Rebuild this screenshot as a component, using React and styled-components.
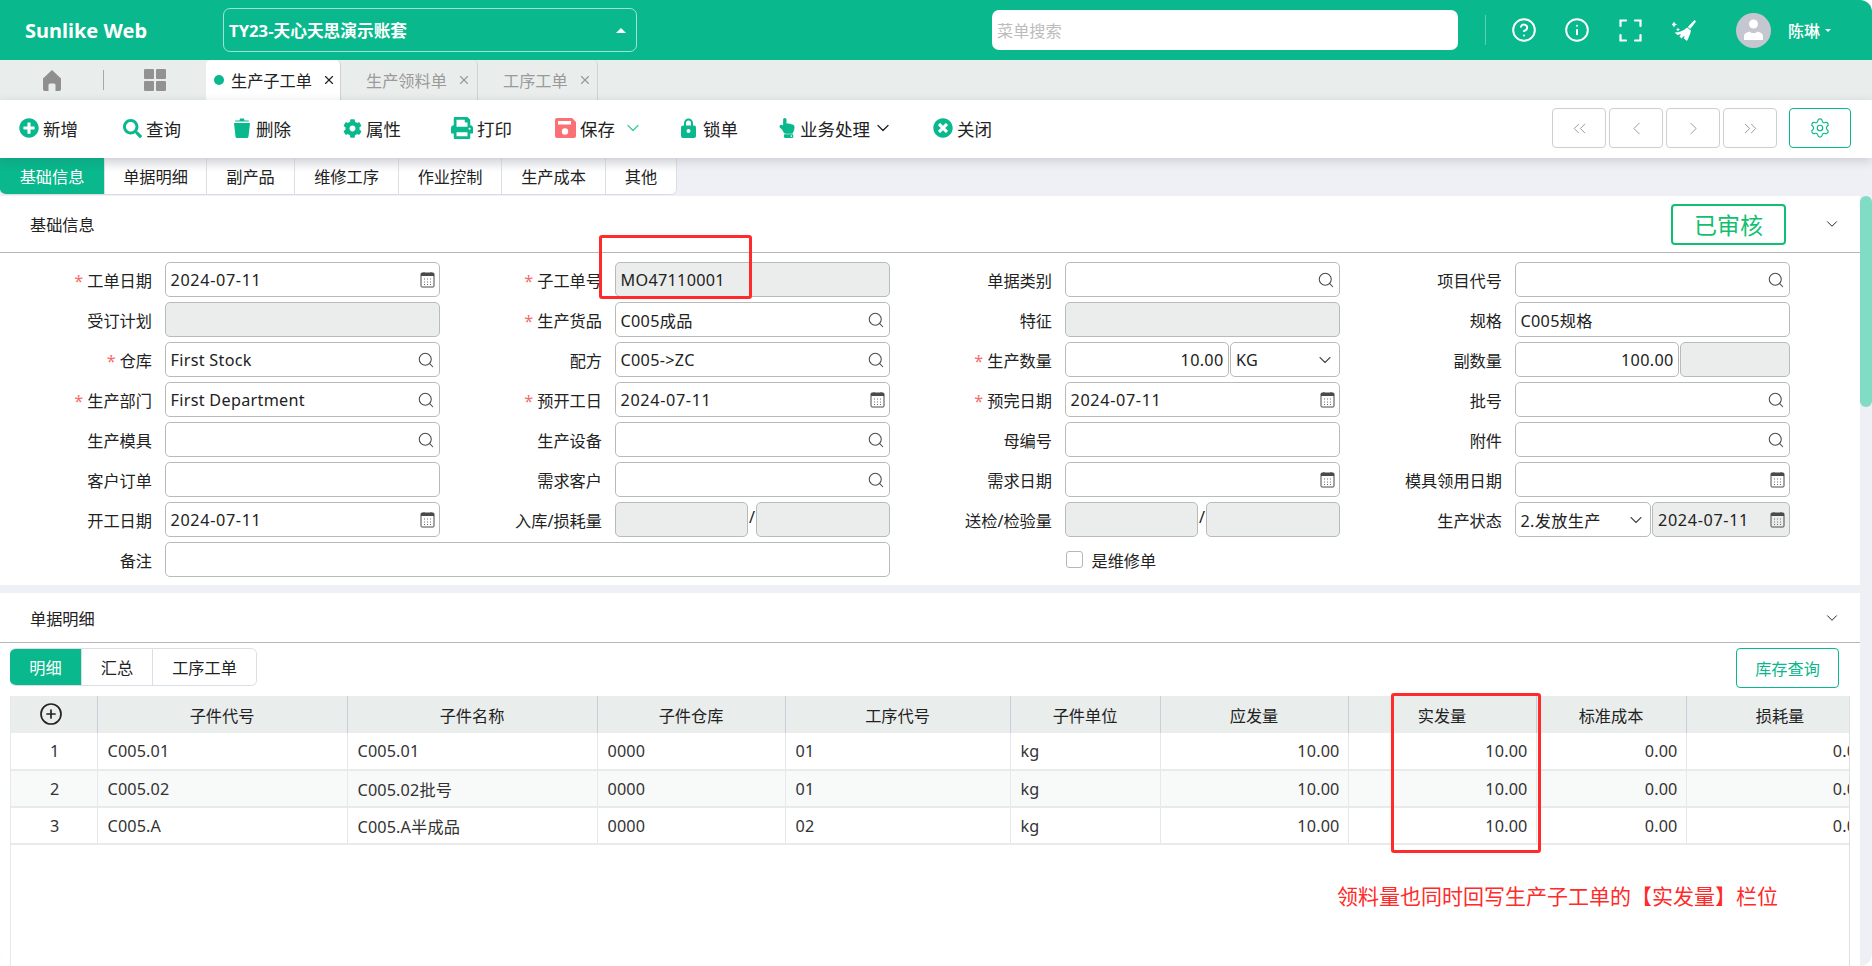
import React from "react";
import styled, { createGlobalStyle } from "styled-components";
import {
  Search,
  ChevronDown,
  ChevronLeft,
  ChevronRight,
  ChevronsLeft,
  ChevronsRight,
  Settings,
  CirclePlus,
  CircleHelp,
  Info,
  X,
} from "lucide-react";
import {
  FaPlusCircle,
  FaSearch,
  FaCog,
  FaPrint,
  FaHandPointUp,
  FaTimesCircle,
} from "react-icons/fa";

const GREEN = "#09b88c";

const GlobalStyle = createGlobalStyle`
  html, body {
    margin: 0;
    padding: 0;
    background: #fff;
    overflow: hidden;
  }
  * {
    box-sizing: border-box;
  }
  body {
    font-family: "Noto Sans", "Noto Sans CJK SC", sans-serif;
    font-size: 16.2px;
    color: #222;
  }
`;

const Page = styled.div`
  position: relative;
  width: 1872px;
  height: 966px;
  display: flex;
  flex-direction: column;
  overflow: hidden;
  background: #eff0f5;
  border-radius: 0 12px 12px 12px;
`;

const Header = styled.header`
  height: 60px;
  flex: none;
  display: flex;
  align-items: center;
  padding-left: 25px;
  background: ${GREEN};
  color: #fff;
`;

const Logo = styled.div`
  width: 198px;
  font-size: 20px;
  font-weight: 700;
`;

const BookSelect = styled.div`
  width: 414px;
  height: 44px;
  display: flex;
  align-items: center;
  justify-content: space-between;
  padding: 0 10px 0 5px;
  border: 1px solid rgba(255, 255, 255, 0.6);
  border-radius: 7px;
  font-size: 16.7px;
  font-weight: 700;
`;

const Caret = styled.span`
  width: 0;
  height: 0;
  border-left: ${(p) => p.$size}px solid transparent;
  border-right: ${(p) => p.$size}px solid transparent;
  border-${(p) => (p.$down ? "top" : "bottom")}: ${(p) => p.$size}px solid #fff;
`;

const MenuSearch = styled.div`
  width: 466px;
  height: 40px;
  margin-left: 355px;
  display: flex;
  align-items: center;
  padding-left: 5px;
  background: #fff;
  border-radius: 7px;
  color: #bcbcbc;
`;

const HeaderDivider = styled.span`
  width: 1px;
  height: 30px;
  margin-left: 27px;
  background: rgba(255, 255, 255, 0.35);
`;

const HeaderIcons = styled.div`
  width: 214px;
  margin-left: 11px;
  display: grid;
  grid-template-columns: repeat(4, 53.5px);
  justify-items: center;
  align-items: center;
`;

const Avatar = styled.div`
  width: 35px;
  height: 35px;
  margin-left: 25px;
  flex: none;
  border-radius: 50%;
  overflow: hidden;
  background: #c4c7d0;
`;

const UserName = styled.div`
  margin-left: 17px;
  margin-right: 5px;
  font-size: 16px;
  font-weight: 500;
`;

const TabBar = styled.nav`
  height: 40px;
  flex: none;
  display: flex;
  align-items: stretch;
  background: #e9edeb;
`;

const TabIcons = styled.div`
  width: 206px;
  display: flex;
  align-items: center;
`;

const TabIconCell = styled.div`
  width: ${(p) => p.$w}px;
  display: flex;
  justify-content: center;
`;

const TabSeparator = styled.span`
  width: 1px;
  height: 20px;
  background: #a5a9a8;
`;

const Tab = styled.div`
  width: ${(p) => p.$w}px;
  display: flex;
  align-items: center;
  gap: 5px;
  padding-left: ${(p) => (p.$active ? 8 : 25)}px;
  border-right: 1px solid #cfd2d2;
  border-radius: 5px 5px 0 0;
  background: ${(p) => (p.$active ? "#fff" : "transparent")};
  color: ${(p) => (p.$active ? "#222" : "#9a9a9a")};
`;

const TabDot = styled.span`
  width: 10px;
  height: 10px;
  margin-right: 2px;
  border-radius: 50%;
  background: ${GREEN};
`;

const TabClose = styled(X)`
  margin-left: 5px;
  flex: none;
`;

const Toolbar = styled.div`
  position: relative;
  z-index: 2;
  height: 58px;
  flex: none;
  display: flex;
  align-items: center;
  padding: 0 0 2px 19px;
  background: #fff;
  box-shadow: 0 3px 10px rgba(60, 64, 90, 0.2);
`;

const ToolItem = styled.div`
  width: ${(p) => p.$w}px;
  flex: none;
  display: flex;
  align-items: center;
  gap: ${(p) => p.$gap ?? 4}px;
  font-size: 17.5px;
  color: #222;
  svg {
    flex: none;
  }
`;

const ToolColor = styled.span`
  display: flex;
  color: ${(p) => p.$color || GREEN};
  margin-left: ${(p) => p.$ml || 0}px;
`;

const NavGroup = styled.div`
  margin-left: auto;
  margin-right: 21px;
  display: flex;
  align-items: center;
  gap: 3px;
`;

const NavButton = styled.div`
  width: ${(p) => (p.$accent ? 62 : 54)}px;
  height: 40px;
  margin-left: ${(p) => (p.$accent ? 9 : 0)}px;
  display: flex;
  align-items: center;
  justify-content: center;
  border: 1px solid ${(p) => (p.$accent ? GREEN : "#cfcfcf")};
  border-radius: 4px;
  color: ${(p) => (p.$accent ? GREEN : "#8c8c8c")};
`;

const SubTabRow = styled.div`
  height: 38px;
  flex: none;
  display: flex;
  align-items: flex-start;
  padding-bottom: 1px;
`;

const SubTabs = styled.div`
  display: flex;
  height: 37px;
  border: 1px solid #dcdee6;
  border-top: none;
  border-left: none;
  border-radius: 0 0 6px 6px;
  overflow: hidden;
`;

const SubTab = styled.div`
  width: ${(p) => p.$w}px;
  display: flex;
  align-items: center;
  justify-content: center;
  background: ${(p) =>
    p.$active ? GREEN : "linear-gradient(#eeeef1, #fff 40%)"};
  color: ${(p) => (p.$active ? "#fff" : "#222")};
  border-right: ${(p) => (p.$last ? "none" : "1px solid #dcdee6")};
`;

const Body = styled.div`
  flex: 1;
  min-height: 0;
  display: flex;
`;

const Content = styled.main`
  width: 1860px;
  flex: none;
  display: flex;
  flex-direction: column;
  gap: 8px;
`;

const Gutter = styled.div`
  flex: 1;
`;

const Thumb = styled.div`
  height: 211px;
  border-radius: 6px;
  background: #80dcc4;
`;

const Section = styled.section`
  background: #fff;
  flex: ${(p) => (p.$fill ? 1 : "none")};
  display: flex;
  flex-direction: column;
  min-height: 0;
`;

const SectionHead = styled.div`
  height: ${(p) => p.$h}px;
  flex: none;
  display: flex;
  align-items: center;
  padding: 0 19px 0 30px;
  border-bottom: 1px solid #b5b7b7;
`;

const SectionTitle = styled.div`
  flex: 1;
`;

const StatusBadge = styled.div`
  width: 115px;
  height: 41px;
  margin-right: 37px;
  display: flex;
  align-items: center;
  justify-content: center;
  border: 2px solid #10c070;
  border-radius: 4px;
  color: #10c070;
  font-size: 23px;
`;

const FormGrid = styled.div`
  display: grid;
  grid-template-columns: repeat(4, 450px);
  grid-auto-rows: 35px;
  row-gap: 5px;
  padding: 9px 0 8px;
`;

const FieldWrap = styled.div`
  grid-column: span ${(p) => p.$span || 1};
  display: flex;
  align-items: center;
`;

const Label = styled.label`
  width: 152px;
  flex: none;
  margin-right: 12.5px;
  text-align: right;
  white-space: nowrap;
`;

const Star = styled.span`
  margin-right: 4px;
  color: #f56c6c;
`;

const Controls = styled.div`
  width: ${(p) => p.$w || 275}px;
  height: 35px;
  display: flex;
  align-items: stretch;
  gap: ${(p) => p.$gap ?? 1.5}px;
`;

const Box = styled.div`
  flex: ${(p) => (p.$w ? `0 0 ${p.$w}px` : 1)};
  min-width: 0;
  display: flex;
  align-items: center;
  justify-content: ${(p) => (p.$right ? "flex-end" : "space-between")};
  padding: 0 4px 0 5px;
  border: 1px solid #b9bbbb;
  border-radius: 5px;
  background: ${(p) => (p.$off ? "#ebedec" : "#fff")};
  color: #222;
  letter-spacing: 0.3px;
  white-space: nowrap;
  svg {
    flex: none;
    color: #4a4a4a;
  }
`;

const DateText = styled.span`
  letter-spacing: 0.65px;
`;

const Slash = styled.span`
  width: 8px;
  text-align: center;
  line-height: 30px;
`;

const CheckWrap = styled.div`
  grid-column: 3;
  margin-left: 165.5px;
  display: flex;
  align-items: center;
  gap: 9px;
`;

const CheckBox = styled.span`
  width: 17px;
  height: 17px;
  border: 1.5px solid #b5b7b7;
  border-radius: 3px;
`;

const DetailBar = styled.div`
  display: flex;
  justify-content: space-between;
  align-items: flex-start;
  padding: 5px 21px 0 10px;
`;

const DetailTabs = styled.div`
  height: 38px;
  display: flex;
  border: 1px solid #dcdee6;
  border-left: none;
  border-radius: 6px;
  overflow: hidden;
`;

const DetailTab = styled.div`
  width: ${(p) => p.$w}px;
  display: flex;
  align-items: center;
  justify-content: center;
  background: ${(p) => (p.$active ? GREEN : "#fff")};
  color: ${(p) => (p.$active ? "#fff" : "#222")};
  border-right: ${(p) => (p.$last ? "none" : "1px solid #dcdee6")};
`;

const StockButton = styled.div`
  width: 103px;
  height: 40px;
  display: flex;
  align-items: center;
  justify-content: center;
  border: 1px solid ${GREEN};
  border-radius: 4px;
  color: ${GREEN};
`;

const TableWrap = styled.div`
  flex: 1;
  width: 1840px;
  margin: 8px 0 0 10px;
  overflow: hidden;
  border-left: 1px solid #e6e8ec;
  border-right: 1px solid #e0e0e0;
`;

const Table = styled.table`
  width: 1863px;
  table-layout: fixed;
  border-collapse: collapse;
`;

const Th = styled.th`
  height: 37px;
  padding: 0;
  background: #e9edec;
  border-right: 1px solid #c9cedb;
  font-weight: 400;
  text-align: center;
  color: #222;
`;

const AddRow = styled(CirclePlus)`
  display: block;
  margin: -2px 0 0 28px;
  color: #222;
`;

const Tr = styled.tr`
  background: ${(p) => (p.$alt ? "#f8f9f9" : "#fff")};
`;

const Td = styled.td`
  height: 37px;
  padding: 0 8px 0 10px;
  border-right: 1px solid #e6e8ec;
  border-bottom: 2px solid #e9ebeb;
  text-align: ${(p) => p.$align || "left"};
  color: #333;
  letter-spacing: 0.15px;
  white-space: nowrap;
`;

const MarkBox = styled.div`
  position: absolute;
  left: ${(p) => p.$x}px;
  top: ${(p) => p.$y}px;
  width: ${(p) => p.$w}px;
  height: ${(p) => p.$h}px;
  border: 3px solid #ff2a2a;
  border-radius: 3px;
  z-index: 5;
`;

const MarkNote = styled.div`
  position: absolute;
  left: 1337px;
  top: 880px;
  font-size: 21px;
  line-height: 32px;
  color: #ff2a2a;
  white-space: nowrap;
  z-index: 5;
`;

const Calendar = () => (
  <svg width="15" height="17" viewBox="0 0 15 17" fill="none">
    <rect x="1" y="2" width="13" height="14" rx="1" stroke="#4a4a4a" />
    <rect x="1" y="2" width="13" height="3" fill="#4a4a4a" />
    <path d="M4 1v2M11 1v2" stroke="#4a4a4a" />
    <path
      d="M4 8h1M7 8h1M10 8h1M4 11h1M7 11h1M10 11h1M4 13.5h1M7 13.5h1M10 13.5h1"
      stroke="#6a6a6a"
    />
  </svg>
);

const SearchIcon = () => <Search size={18} strokeWidth={1.4} />;
const DownIcon = () => <ChevronDown size={20} strokeWidth={1.3} />;

const FullScreen = () => (
  <svg width="23" height="23" viewBox="0 0 23 23" fill="none" stroke="#fff" strokeWidth="2.2" strokeLinecap="round">
    <path d="M1.5 7V1.5H7M16 1.5h5.5V7M21.5 16v5.5H16M7 21.5H1.5V16" />
  </svg>
);

const Broom = () => (
  <svg width="24" height="23" viewBox="0 0 24 23" fill="#fff">
    <path d="M22.5 1 24 2.5 18.2 10 15.8 8Z" />
    <path d="M15 8.500 19 11.500C18.200 15 16.800 18.500 15 22L12 19.500 12.500 16.500 9.500 19.500 7.500 17.500 9 15 5.500 16 2.500 13.500C7 13.500 11.500 12 15 8.500Z" />
    <path d="M2 2.500 3 4.500 5 5.500 3 6.500 2 8.500 1 6.500-1 5.500 1 4.500Z" />
    <path d="M6 8.500 6.700 10 8 10.500 6.700 11.200 6 12.500 5.300 11.200 4 10.500 5.300 10Z" />
  </svg>
);

const AvatarFace = () => (
  <svg width="35" height="35" viewBox="0 0 35 35" fill="#fff">
    <circle cx="17.5" cy="11" r="4.5" />
    <path d="M8 27v-3.500c0-3 2.500-4 5.500-5l2 1.500h4l2-1.500c3 1 5.500 2 5.500 5V27Z" />
  </svg>
);

const HomeIcon = () => (
  <svg width="18" height="21" viewBox="0 0 18 21" fill="#8f8f8f">
    <path d="M9 0 18 8.500V19a2 2 0 0 1-2 2h-3.500v-6a1.500 1.500 0 0 0-1.500-1.500H7A1.500 1.500 0 0 0 5.500 15v6H2a2 2 0 0 1-2-2V8.500Z" />
  </svg>
);

const Trash = () => (
  <svg width="18" height="20" viewBox="0 0 18 20" fill={GREEN}>
    <path d="M1 5h16l-1.500 13.500c-.1.900-.8 1.500-1.600 1.500H4.100c-.8 0-1.500-.6-1.600-1.500Z" />
    <path d="M7 .5h4l.5 2h3.500c.600 0 1 .4 1 1H2c0-.600.400-1 1-1h3.500Z" />
  </svg>
);

const Save = () => (
  <svg width="21" height="20" viewBox="0 0 21 20">
    <path d="M2 0h15l4 4v14a2 2 0 0 1-2 2H2a2 2 0 0 1-2-2V2a2 2 0 0 1 2-2Z" fill="#fb7075" />
    <rect x="3" y="3" width="13" height="3.500" fill="#fff" />
    <circle cx="10" cy="13.500" r="3.200" fill="#fff" />
  </svg>
);

const Lock = () => (
  <svg width="15" height="20" viewBox="0 0 15 20" fill={GREEN}>
    <path d="M3 8V5a4.500 4.500 0 0 1 9 0v3h-2V5a2.500 2.500 0 0 0-5 0v3Z" />
    <path d="M2 7.500h11a2 2 0 0 1 2 2V18a2 2 0 0 1-2 2H2a2 2 0 0 1-2-2V9.500a2 2 0 0 1 2-2Z" />
    <circle cx="7.500" cy="13" r="2" fill="#fff" />
  </svg>
);

const GridIcon = () => (
  <svg width="22" height="22" viewBox="0 0 22 22" fill="#929292">
    <rect width="10" height="10" rx="1" />
    <rect x="12" width="10" height="10" rx="1" />
    <rect y="12" width="10" height="10" rx="1" />
    <rect x="12" y="12" width="10" height="10" rx="1" />
  </svg>
);

const Field = ({ label, required, span, w, gap, children }) => (
  <FieldWrap $span={span}>
    <Label>
      {required && <Star>*</Star>}
      {label}
    </Label>
    <Controls $w={w} $gap={gap}>
      {children}
    </Controls>
  </FieldWrap>
);

const columns = [
  { title: "", w: 86 },
  { title: "子件代号", w: 250 },
  { title: "子件名称", w: 250 },
  { title: "子件仓库", w: 188 },
  { title: "工序代号", w: 225 },
  { title: "子件单位", w: 150 },
  { title: "应发量", w: 188, right: true },
  { title: "实发量", w: 188, right: true },
  { title: "标准成本", w: 150, right: true },
  { title: "损耗量", w: 188, right: true },
];

const rows = [
  ["C005.01", "C005.01", "0000", "01", "kg", "10.00", "10.00", "0.00", "0.00"],
  ["C005.02", "C005.02批号", "0000", "01", "kg", "10.00", "10.00", "0.00", "0.00"],
  ["C005.A", "C005.A半成品", "0000", "02", "kg", "10.00", "10.00", "0.00", "0.00"],
];

export default function App() {
  return (
    <Page>
      <GlobalStyle />
      <Header>
        <Logo>Sunlike Web</Logo>
        <BookSelect>
          TY23-天心天思演示账套
          <Caret $size={5} />
        </BookSelect>
        <MenuSearch>菜单搜索</MenuSearch>
        <HeaderDivider />
        <HeaderIcons>
          <CircleHelp size={26} strokeWidth={1.8} />
          <Info size={26} strokeWidth={1.8} />
          <FullScreen />
          <Broom />
        </HeaderIcons>
        <Avatar>
          <AvatarFace />
        </Avatar>
        <UserName>陈琳</UserName>
        <Caret $size={3.5} $down />
      </Header>

      <TabBar>
        <TabIcons>
          <TabIconCell $w={103}>
            <HomeIcon />
          </TabIconCell>
          <TabSeparator />
          <TabIconCell $w={102}>
            <GridIcon />
          </TabIconCell>
        </TabIcons>
        <Tab $active $w={135}>
          <TabDot />
          生产子工单
          <TabClose size={14} />
        </Tab>
        <Tab $w={137}>
          生产领料单
          <TabClose size={14} />
        </Tab>
        <Tab $w={120}>
          工序工单
          <TabClose size={14} />
        </Tab>
      </TabBar>

      <Toolbar>
        <ToolItem $w={104}>
          <ToolColor><FaPlusCircle size={20} /></ToolColor>新增
        </ToolItem>
        <ToolItem $w={110}>
          <ToolColor><FaSearch size={19} /></ToolColor>查询
        </ToolItem>
        <ToolItem $w={110} $gap={5}>
          <Trash />删除
        </ToolItem>
        <ToolItem $w={108}>
          <ToolColor><FaCog size={19} /></ToolColor>属性
        </ToolItem>
        <ToolItem $w={104}>
          <ToolColor><FaPrint size={22} /></ToolColor>打印
        </ToolItem>
        <ToolItem $w={126}>
          <Save />保存
          <ToolColor $color="#3cc8a4" $ml={4}>
            <ChevronDown size={20} strokeWidth={1.5} />
          </ToolColor>
        </ToolItem>
        <ToolItem $w={96} $gap={7}>
          <Lock />锁单
        </ToolItem>
        <ToolItem $w={156} $gap={3}>
          <ToolColor><FaHandPointUp size={20} /></ToolColor>业务处理
          <ChevronDown size={20} strokeWidth={1.5} />
        </ToolItem>
        <ToolItem $w={80}>
          <ToolColor><FaTimesCircle size={20} /></ToolColor>关闭
        </ToolItem>
        <NavGroup>
          <NavButton><ChevronsLeft size={21} strokeWidth={1} /></NavButton>
          <NavButton><ChevronLeft size={21} strokeWidth={1} /></NavButton>
          <NavButton><ChevronRight size={21} strokeWidth={1} /></NavButton>
          <NavButton><ChevronsRight size={21} strokeWidth={1} /></NavButton>
          <NavButton $accent><Settings size={22} strokeWidth={1.3} /></NavButton>
        </NavGroup>
      </Toolbar>

      <SubTabRow>
        <SubTabs>
          <SubTab $active $w={105}>基础信息</SubTab>
          <SubTab $w={102}>单据明细</SubTab>
          <SubTab $w={88}>副产品</SubTab>
          <SubTab $w={104}>维修工序</SubTab>
          <SubTab $w={103}>作业控制</SubTab>
          <SubTab $w={104}>生产成本</SubTab>
          <SubTab $w={70} $last>其他</SubTab>
        </SubTabs>
      </SubTabRow>

      <Body>
        <Content>
          <Section>
            <SectionHead $h={57}>
              <SectionTitle>基础信息</SectionTitle>
              <StatusBadge>已审核</StatusBadge>
              <ChevronDown size={18} strokeWidth={1.3} />
            </SectionHead>
            <FormGrid>
              <Field label="工单日期" required>
                <Box><DateText>2024-07-11</DateText><Calendar /></Box>
              </Field>
              <Field label="子工单号" required>
                <Box $off>MO47110001</Box>
              </Field>
              <Field label="单据类别">
                <Box><span /><SearchIcon /></Box>
              </Field>
              <Field label="项目代号">
                <Box><span /><SearchIcon /></Box>
              </Field>

              <Field label="受订计划"><Box $off /></Field>
              <Field label="生产货品" required>
                <Box>C005成品<SearchIcon /></Box>
              </Field>
              <Field label="特征"><Box $off /></Field>
              <Field label="规格"><Box>C005规格</Box></Field>

              <Field label="仓库" required>
                <Box>First Stock<SearchIcon /></Box>
              </Field>
              <Field label="配方">
                <Box>C005-&gt;ZC<SearchIcon /></Box>
              </Field>
              <Field label="生产数量" required>
                <Box $w={164} $right>10.00</Box>
                <Box>KG<DownIcon /></Box>
              </Field>
              <Field label="副数量">
                <Box $w={164} $right>100.00</Box>
                <Box $off />
              </Field>

              <Field label="生产部门" required>
                <Box>First Department<SearchIcon /></Box>
              </Field>
              <Field label="预开工日" required>
                <Box><DateText>2024-07-11</DateText><Calendar /></Box>
              </Field>
              <Field label="预完日期" required>
                <Box><DateText>2024-07-11</DateText><Calendar /></Box>
              </Field>
              <Field label="批号">
                <Box><span /><SearchIcon /></Box>
              </Field>

              <Field label="生产模具">
                <Box><span /><SearchIcon /></Box>
              </Field>
              <Field label="生产设备">
                <Box><span /><SearchIcon /></Box>
              </Field>
              <Field label="母编号"><Box /></Field>
              <Field label="附件">
                <Box><span /><SearchIcon /></Box>
              </Field>

              <Field label="客户订单"><Box /></Field>
              <Field label="需求客户">
                <Box><span /><SearchIcon /></Box>
              </Field>
              <Field label="需求日期">
                <Box><span /><Calendar /></Box>
              </Field>
              <Field label="模具领用日期">
                <Box><span /><Calendar /></Box>
              </Field>

              <Field label="开工日期">
                <Box><DateText>2024-07-11</DateText><Calendar /></Box>
              </Field>
              <Field label="入库/损耗量" gap={0}>
                <Box $off />
                <Slash>/</Slash>
                <Box $off />
              </Field>
              <Field label="送检/检验量" gap={0}>
                <Box $off />
                <Slash>/</Slash>
                <Box $off />
              </Field>
              <Field label="生产状态">
                <Box $w={136}>2.发放生产<DownIcon /></Box>
                <Box $off><DateText>2024-07-11</DateText><Calendar /></Box>
              </Field>

              <Field label="备注" span={2} w={725}><Box /></Field>
              <CheckWrap>
                <CheckBox />
                是维修单
              </CheckWrap>
            </FormGrid>
          </Section>

          <Section $fill>
            <SectionHead $h={50}>
              <SectionTitle>单据明细</SectionTitle>
              <ChevronDown size={18} strokeWidth={1.3} />
            </SectionHead>
            <DetailBar>
              <DetailTabs>
                <DetailTab $active $w={72}>明细</DetailTab>
                <DetailTab $w={71}>汇总</DetailTab>
                <DetailTab $w={103} $last>工序工单</DetailTab>
              </DetailTabs>
              <StockButton>库存查询</StockButton>
            </DetailBar>
            <TableWrap>
              <Table>
                <colgroup>
                  {columns.map((c, i) => (
                    <col key={i} width={c.w} />
                  ))}
                </colgroup>
                <thead>
                  <tr>
                    {columns.map((c, i) => (
                      <Th key={i}>
                        {i === 0 ? <AddRow size={24} strokeWidth={1.7} /> : c.title}
                      </Th>
                    ))}
                  </tr>
                </thead>
                <tbody>
                  {rows.map((row, r) => (
                    <Tr key={r} $alt={r === 1}>
                      <Td $align="center">{r + 1}</Td>
                      {row.map((v, i) => (
                        <Td key={i} $align={columns[i + 1].right ? "right" : "left"}>
                          {v}
                        </Td>
                      ))}
                    </Tr>
                  ))}
                </tbody>
              </Table>
            </TableWrap>
          </Section>
        </Content>
        <Gutter>
          <Thumb />
        </Gutter>
      </Body>

      <MarkBox $x={599} $y={235} $w={153} $h={64} />
      <MarkBox $x={1391} $y={693} $w={150} $h={160} />
      <MarkNote>领料量也同时回写生产子工单的【实发量】栏位</MarkNote>
    </Page>
  );
}
